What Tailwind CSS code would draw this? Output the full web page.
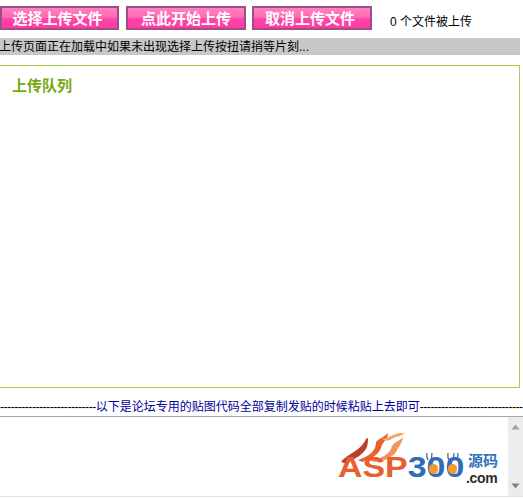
<!DOCTYPE html>
<html lang="zh">
<head>
<meta charset="utf-8">
<script src="https://cdn.jsdelivr.net/npm/@tailwindcss/browser@4"></script>
</head>
<body class="bg-white overflow-hidden font-['Liberation_Sans','Noto_Sans_CJK_SC',sans-serif] text-[12px] text-black">
<div class="w-[523px] h-[499px] flex flex-col">
  <div class="flex items-start h-[38px] pt-[6px]">
    <button class="w-[119px] h-[24px] pr-[4px] pb-[1px] border-2 border-[#9a4f8c] bg-[linear-gradient(#ff82bf_0%,#ff68b2_48%,#ff45a8_52%,#ff3aa3_100%)] text-white font-bold text-[15px] leading-[20px] font-['Noto_Sans_CJK_SC',serif]">选择上传文件</button>
    <button class="ml-[7px] w-[120px] h-[24px] pb-[1px] border-2 border-[#9a4f8c] bg-[linear-gradient(#ff82bf_0%,#ff68b2_48%,#ff45a8_52%,#ff3aa3_100%)] text-white font-bold text-[15px] leading-[20px] font-['Noto_Sans_CJK_SC',serif]">点此开始上传</button>
    <button class="ml-[6px] w-[120px] h-[24px] pr-[4px] pb-[1px] border-2 border-[#9a4f8c] bg-[linear-gradient(#ff82bf_0%,#ff68b2_48%,#ff45a8_52%,#ff3aa3_100%)] text-white font-bold text-[15px] leading-[20px] font-['Noto_Sans_CJK_SC',serif]">取消上传文件</button>
    <span class="ml-[18px] mt-[7px] leading-[18px]">0 个文件被上传</span>
  </div>
  <div class="w-[520px] h-[17px] bg-[#c8c8c8] leading-[18px] whitespace-nowrap"><span class="ml-[-1px] block">上传页面正在加载中如果未出现选择上传按扭请捎等片刻...</span></div>
  <div class="mt-[10px] ml-[-1px] w-[521px] h-[323px] border border-[#a4d246] pl-[12px] pt-[9px]">
    <h2 class="text-[15px] font-bold text-[#76a80f] leading-[20px] font-['Noto_Sans_CJK_SC',serif]">上传队列</h2>
  </div>
  <div class="mt-[10px] h-[18px] flex items-center whitespace-nowrap text-[#000099] leading-[17px]">
    <span class="text-black tracking-[-0.45px]">---------------------------</span>
    <span>以下是论坛专用的贴图代码全部复制发贴的时候粘贴上去即可</span>
    <span class="text-black tracking-[-0.45px]">-----------------------------</span>
  </div>
  <div class="relative h-[81px] border-t border-b border-t-[#a8a8a8] border-b-[#e4e4e4] flex justify-end">
    <div class="w-[15px] bg-[#ececec] flex flex-col items-center justify-between pt-[7px] pb-[7px]">
      <svg width="9" height="6" viewBox="0 0 9 6"><path d="M4.5 0.5 8.5 5.5H0.5Z" fill="#a0a0a0"/></svg>
      <svg width="9" height="6" viewBox="0 0 9 6"><path d="M4.5 5.5 8.5 0.5H0.5Z" fill="#808080"/></svg>
    </div>
    <div class="absolute left-[336px] top-[14px] w-[170px] h-[66px]">
      <svg class="absolute left-[0px] top-[0px]" width="130" height="60" viewBox="0 0 130 60">
        <path d="M5 31C12 22 24 21 30 8C33 4 32 12 31 16C27 25 18 27 11 33Z" fill="#b8402c"/>
        <path d="M22 29C30 26 40 22 40 11C44 7 50 5 52 2C52 9 46 11 45 17C42 25 33 28 26 31Z" fill="#e8622c"/>
        <path d="M34 29C44 28 54 24 56 15C58 11 64 10 67 6C66 13 62 16 60 21C56 27 46 31 38 31Z" fill="#f0955c"/>
        <path d="M46 8C52 7 56 4 60 3C64 1 66 3 69 2C65 6 60 5 56 8C52 10 49 10 46 8Z" fill="#f2a868"/>
        <path d="M92 29C90 26 91 24 91 22M96 29C95 26 96 24 96 22M113 29C111 26 112 24 112 22M118 29C117 26 118 24 118 22M122 29C121 26 122 24 122 22" stroke="#4a5f78" stroke-width="1.2" fill="none"/>
      </svg>
      <div class="absolute left-[2px] top-[18px] text-[30px] leading-[36px] font-bold font-['Liberation_Sans',sans-serif] whitespace-nowrap origin-left scale-x-[1.13]"><span class="text-[#e85e30]">ASP</span><span class="text-[#2f6cb8]">300</span></div>
      <div class="absolute left-[93px] top-[33px] w-[9px] h-[10px] rounded-full bg-[#f09a30]"></div>
      <div class="absolute left-[112px] top-[33px] w-[9px] h-[10px] rounded-full bg-[#f09a30]"></div>
      <div class="absolute left-[132px] top-[20px] text-[15px] leading-[18px] font-bold text-[#3272b5] font-['Noto_Sans_CJK_SC',sans-serif] whitespace-nowrap">源码</div>
      <div class="absolute left-[130px] top-[40px] text-[14px] leading-[14px] font-bold text-[#2a2a2a] whitespace-nowrap tracking-[-0.3px]">.com</div>
    </div>
  </div>
</div>
</body>
</html>
